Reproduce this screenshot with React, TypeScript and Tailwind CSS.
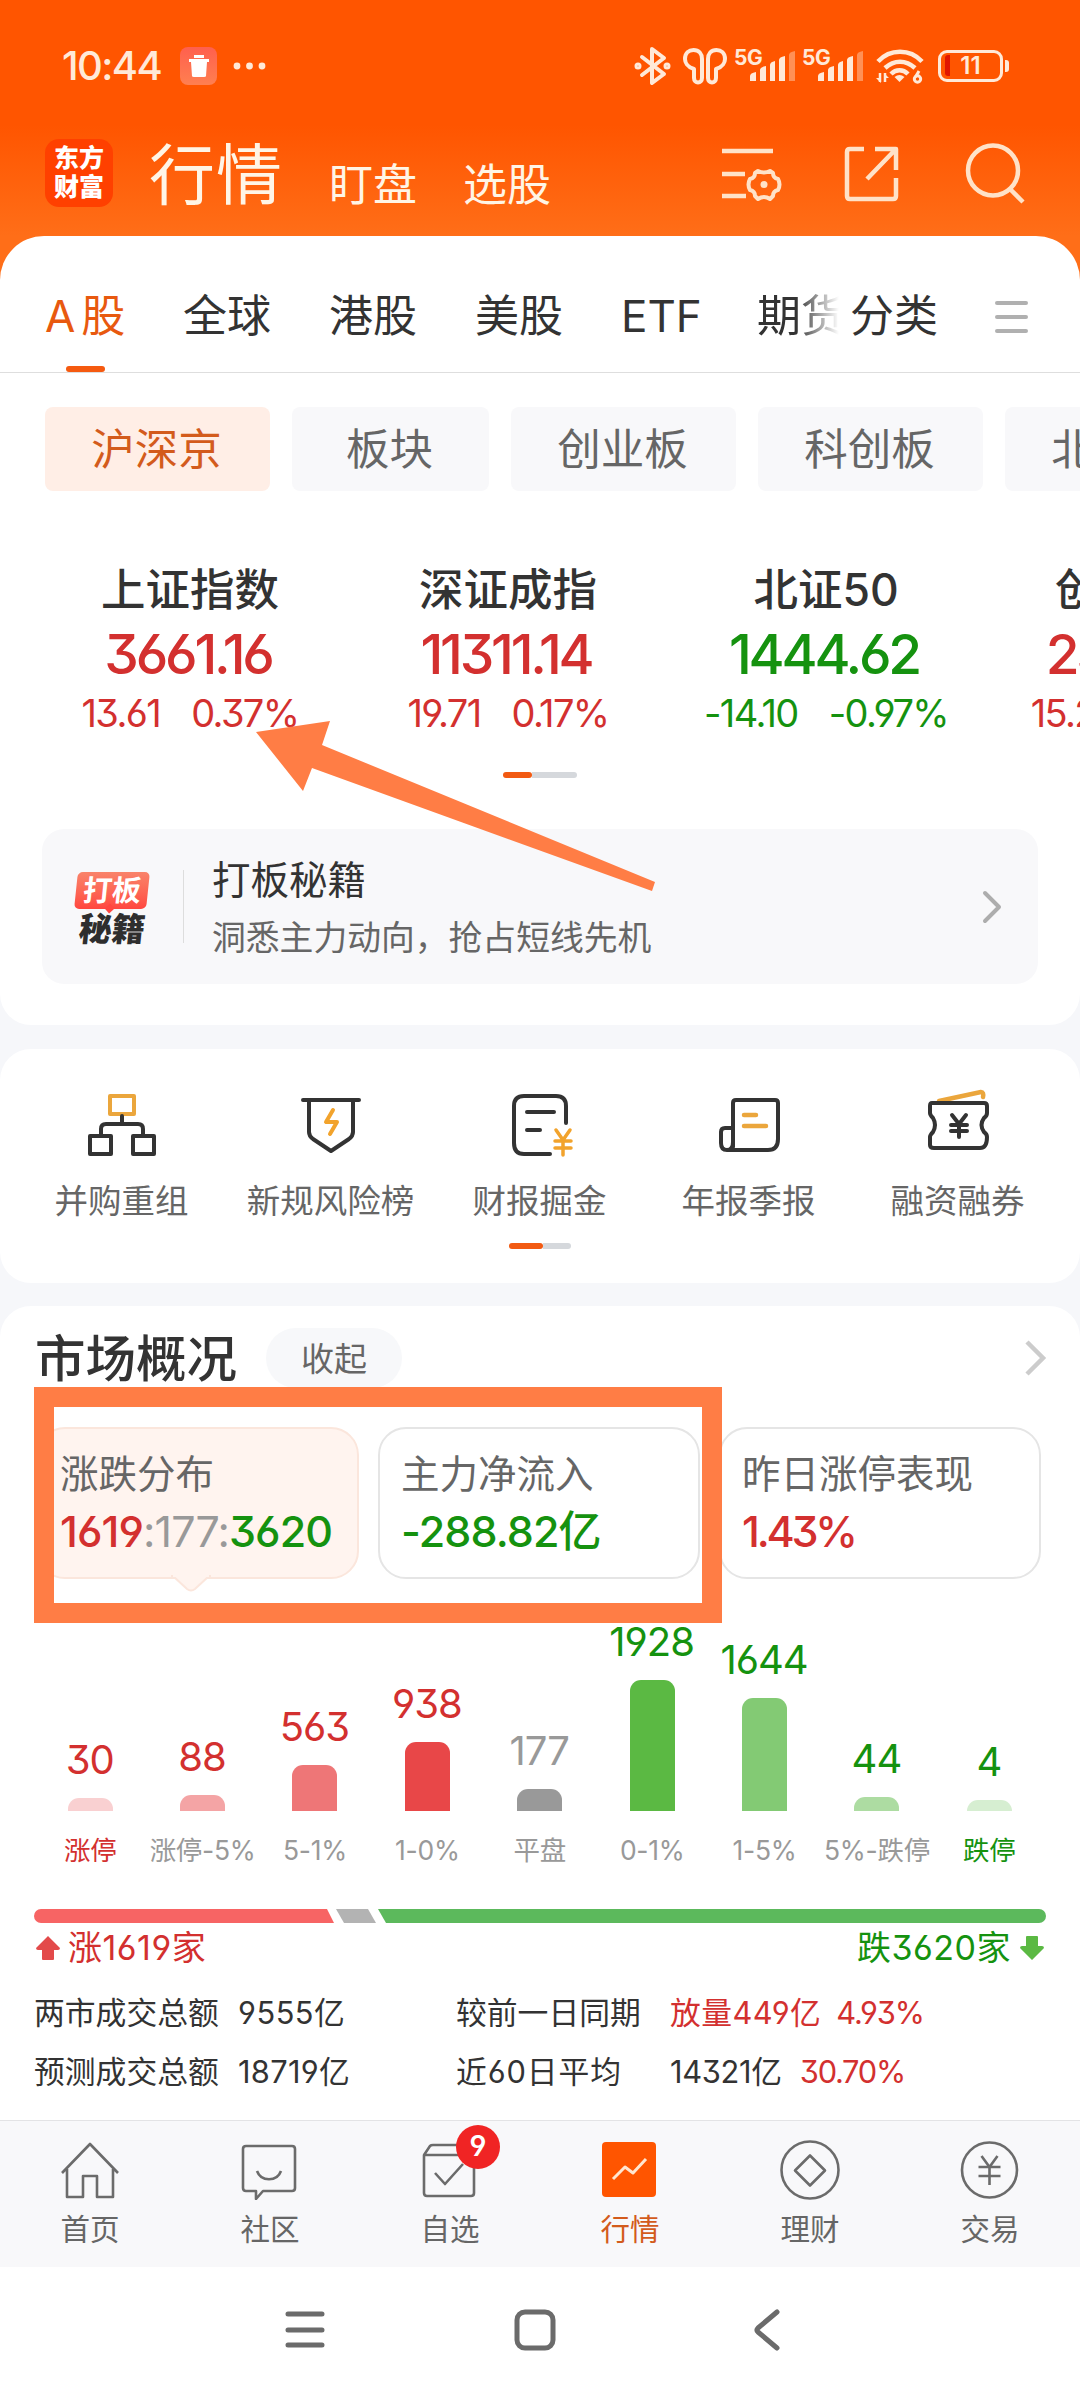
import type { ReactNode } from 'react';
import clsx from 'clsx';

const RED = 'text-[#d3302f]';
const GREEN = 'text-[#15920f]';

const tabs = [
  { label: '全球', width: 'w-[146px]' },
  { label: '港股', width: 'w-[146px]' },
  { label: '美股', width: 'w-[146px]' },
  { label: 'ETF', width: 'w-[136px]' },
];

const chips = [
  { label: '沪深京', width: 'w-[225px]', active: true },
  { label: '板块', width: 'w-[197px]' },
  { label: '创业板', width: 'w-[225px]' },
  { label: '科创板', width: 'w-[225px]' },
  { label: '北交所', width: 'w-[225px]' },
];

const indices = [
  { name: '上证指数', value: '3661.16', change: '13.61', percent: '0.37%', color: RED },
  { name: '深证成指', value: '11311.14', change: '19.71', percent: '0.17%', color: RED },
  { name: '北证50', value: '1444.62', change: '-14.10', percent: '-0.97%', color: GREEN },
  { name: '创业板指', value: '2359.80', change: '15.28', percent: '0.65%', color: RED },
];

const distribution = [
  { count: 30, label: '涨停', height: 13, bar: 'bg-[#f9d0d1]', color: RED, labelColor: RED },
  { count: 88, label: '涨停-5%', height: 16, bar: 'bg-[#f4a4a5]', color: RED },
  { count: 563, label: '5-1%', height: 46, bar: 'bg-[#ee7677]', color: RED },
  { count: 938, label: '1-0%', height: 69, bar: 'bg-[#e84748]', color: RED },
  { count: 177, label: '平盘', height: 22, bar: 'bg-[#999999]', color: 'text-[#999]' },
  { count: 1928, label: '0-1%', height: 131, bar: 'bg-[#5bb943]', color: GREEN },
  { count: 1644, label: '1-5%', height: 113, bar: 'bg-[#83ca74]', color: GREEN },
  { count: 44, label: '5%-跌停', height: 14, bar: 'bg-[#addca2]', color: GREEN },
  { count: 4, label: '跌停', height: 11, bar: 'bg-[#d6eed1]', color: GREEN, labelColor: GREEN },
];

function Signal() {
  return (
    <div className="flex w-[62px] h-[36px]">
      <span className="text-[21px] leading-[20px] font-bold tracking-[-0.5px]">5G</span>
      <svg className="-ml-[12px] shrink-0" width="46" height="36" viewBox="0 0 46 36" fill="currentColor">
        <path d="M0 28q0-3 6-4v9H0zM10 22q0-3 6-4v15h-6zM20 17q0-3 5-4v20h-5zM29 12q0-3 6-4v25h-6z" />
        <path d="M39 7q0-3 6-4v30h-6z" opacity=".4" />
      </svg>
    </div>
  );
}

function StatusBar() {
  return (
    <div className="flex h-[132px] items-center pl-[62px] text-[#ffe9d8]">
      <span className="w-[118px] text-[40px] leading-[40px] font-medium tracking-[-1.6px]">10:44</span>
      <div className="flex h-[38px] w-[37px] items-center justify-center rounded-[8px] bg-linear-to-b from-[#ff5f4e] to-[#ff7f50]">
        <svg width="22" height="22" viewBox="0 0 22 22" fill="#fff">
          <path d="M6 0h10v3H6zM1 4h20v3h-2l-1 14q0 1-2 1H6q-2 0-2-1L3 7H1z" />
        </svg>
      </div>
      <svg className="ml-[16px]" width="36" height="8" viewBox="0 0 36 8" fill="currentColor">
        <circle cx="4" cy="4" r="3.4" />
        <circle cx="16.500" cy="4" r="3.400" />
        <circle cx="29" cy="4" r="3.400" />
      </svg>
      <div className="ml-auto flex items-center pr-[71px]">
        <svg width="38" height="42" viewBox="0 0 38 42" fill="none" stroke="currentColor" strokeWidth="4" strokeLinejoin="round" strokeLinecap="round">
          <path d="M8 12 30 29 18 38V4l12 9L8 30" />
          <circle cx="4" cy="21" r="1.500" />
          <circle cx="33" cy="21" r="1.500" />
        </svg>
        <svg className="ml-[11px]" width="44" height="38" viewBox="0 0 44 38" fill="none" stroke="currentColor" strokeWidth="4">
          <path d="M11 22C4 20 2 15 2 12 2 6 6 3 10.500 3 16 3 19 7 19 12v19c0 6-8 6-8 0z" strokeLinejoin="round" />
          <path d="M33 22c7-2 9-7 9-10 0-6-4-9-8.500-9C28 3 25 7 25 12v19c0 6 8 6 8 0z" strokeLinejoin="round" />
        </svg>
        <div className="ml-[7px] flex gap-[6px]">
          <Signal />
          <Signal />
        </div>
        <svg className="ml-[12px]" width="48" height="38" viewBox="0 0 48 38" fill="none" stroke="currentColor" strokeWidth="4.500">
          <path d="M2 14.500C14 1.500 34 1.500 46 14.500M9 21C18 12.500 30 12.500 39 21M15 27c5-5 12-5 17 0" />
          <path d="m23.500 35-5-5q5-4 10 0z" fill="currentColor" stroke="none" />
          <path d="M4 26v9M9 26v9" strokeWidth="2.500" />
          <path d="m0 31 5 5v-5zM13 31l-5-5v5z" fill="currentColor" stroke="none" />
          <circle cx="41.500" cy="32" r="3.200" strokeWidth="3" />
          <path d="m39.500 30 3.500-6" strokeWidth="3" />
        </svg>
        <div className="relative ml-[14px] flex h-[32px] w-[65px] items-center justify-center rounded-[9px] border-[3px] border-current">
          <span className="absolute top-[2px] left-[4px] h-[21px] w-[5px] rounded-l-[3px] bg-[#e01500]" />
          <span className="text-[24px] leading-[26px] font-semibold">11</span>
        </div>
        <span className="ml-[2px] h-[12px] w-[4px] rounded-r-[3px] bg-current" />
      </div>
    </div>
  );
}

function TopNav() {
  return (
    <div className="flex h-[82px] items-center pl-[45px] text-[#fff5e6]">
      <div className="flex h-[68px] w-[68px] flex-col items-center justify-center rounded-[14px] bg-[#ff4000] text-[25px] leading-[29px] font-black text-white">
        <span>东方</span>
        <span>财富</span>
      </div>
      <span className="mt-[3px] ml-[36px] text-[66px] leading-[82px] tracking-[1px]">行情</span>
      <span className="mt-[23px] ml-[46px] text-[44px] leading-[60px]">盯盘</span>
      <span className="mt-[23px] ml-[46px] text-[44px] leading-[60px]">选股</span>
      <svg className="ml-[169px]" width="62" height="60" viewBox="0 0 62 60" fill="none" stroke="#ffe2c8" strokeWidth="4.500">
        <path d="M2 8h51M2 31h23M2 53h24" />
        <path
          d="M38 28q6 3 12 0l3 2q0 5 5 6 3 5.500 0 11-5 1-5 6l-3 3q-6-4-12 0l-3-3q0-5-5-6-3-5.500 0-11 5-1 5-6z"
          strokeWidth="4"
          strokeLinejoin="round"
        />
        <circle cx="44" cy="41.500" r="3.500" fill="#ffe2c8" stroke="none" />
      </svg>
      <svg className="ml-[62px]" width="56" height="58" viewBox="0 0 56 58" fill="none" stroke="#ffe2c8" strokeWidth="4.500" strokeLinejoin="round">
        <path d="M20 5H6q-3 0-3 3v44q0 3 3 3h43q3 0 3-3V34M31 5h21v21M51 6 23 35" />
      </svg>
      <svg className="ml-[64px]" width="62" height="62" viewBox="0 0 62 62" fill="none" stroke="#ffe2c8" strokeWidth="4.500">
        <circle cx="29" cy="28.500" r="25" />
        <path d="m46 47 13 13" />
      </svg>
    </div>
  );
}

function MarketTabs() {
  return (
    <div className="flex h-[137px] items-center border-b border-[#dedede] pt-[25px] pl-[45px] text-[44px] leading-[111px] text-[#333]">
      <div className="relative w-[138px] text-[#e8590f]">
        A<span className="ml-[6px]">股</span>
        <span className="absolute bottom-0 left-[21px] h-[6px] w-[39px] rounded-full bg-[#f55a10]" />
      </div>
      {tabs.map((tab) => (
        <span key={tab.label} className={tab.width}>
          {tab.label}
        </span>
      ))}
      <span className="w-[93px] overflow-hidden whitespace-nowrap [mask-image:linear-gradient(to_right,#000_42%,transparent_88%)]">期货</span>
      <span>分类</span>
      <div className="ml-[57px] flex flex-col gap-[10px]">
        <span className="h-[4px] w-[33px] rounded-full bg-[#b0b0b0]" />
        <span className="h-[4px] w-[33px] rounded-full bg-[#b0b0b0]" />
        <span className="h-[4px] w-[33px] rounded-full bg-[#b0b0b0]" />
      </div>
    </div>
  );
}

function Chips() {
  return (
    <div className="flex gap-[22px] overflow-hidden pt-[34px] pl-[45px]">
      {chips.map((chip) => (
        <div
          key={chip.label}
          className={clsx(
            'h-[84px] shrink-0 rounded-[8px] pr-[2px] text-center text-[43.500px] leading-[84px]',
            chip.width,
            chip.active ? 'bg-[#ffeee6] text-[#d35b1c]' : 'bg-[#f8f8fa] text-[#666]',
          )}
        >
          {chip.label}
        </div>
      ))}
    </div>
  );
}

function Pager({ active, rest }: { active: string; rest: string }) {
  return (
    <div className="flex justify-center">
      <span className={clsx('h-[6px] rounded-full bg-[#f25a12]', active)} />
      <span className={clsx('h-[6px] rounded-r-full bg-[#d5d8dc]', rest)} />
    </div>
  );
}

function Indices() {
  return (
    <div className="flex overflow-hidden pt-[69px] pl-[31px]">
      {indices.map((item) => (
        <div key={item.name} className="flex w-[318px] shrink-0 flex-col items-center">
          <span className="text-[44.500px] leading-[60px] font-medium text-[#333]">{item.name}</span>
          <span className={clsx('mr-[4px] text-[55px] leading-[69px] font-medium tracking-[-3.200px]', item.color)}>{item.value}</span>
          <div className={clsx('flex gap-[31px] text-[38px] leading-[49px] tracking-[-1.600px]', item.color)}>
            <span>{item.change}</span>
            <span>{item.percent}</span>
          </div>
        </div>
      ))}
    </div>
  );
}

function TipBanner() {
  return (
    <div className="mx-[42px] mt-[51px] flex h-[155px] items-center rounded-[22px] bg-[#f8f8fa]">
      <div className="ml-[33px] flex w-[74px] flex-col items-center pt-[3px]">
        <div className="relative h-[37px] w-[72px] -skew-x-6 rounded-[5px] bg-linear-to-b from-[#f9836a] to-[#ff4640] text-center text-[29px] leading-[38px] font-bold text-white">
          打板
          <span className="absolute -bottom-[3px] left-[32px] h-[7px] w-[7px] rotate-45 bg-[#ff4640]" />
        </div>
        <span className="mt-[4px] -skew-x-6 text-[33px] leading-[32px] font-black text-[#2e2e2e]">秘籍</span>
      </div>
      <span className="ml-[34px] h-[73px] w-px bg-[#ddd]" />
      <div className="ml-[28px] pt-[6px]">
        <div className="text-[38.500px] leading-[57px] text-[#333]">打板秘籍</div>
        <div className="text-[33.800px] leading-[58px] text-[#666]">洞悉主力动向，抢占短线先机</div>
      </div>
      <svg className="mr-[35px] ml-auto" width="22" height="36" viewBox="0 0 22 36" fill="none" stroke="#adadad" strokeWidth="4" strokeLinecap="round" strokeLinejoin="round">
        <path d="m4 4 14 14L4 32" />
      </svg>
    </div>
  );
}

const shortcuts: { label: string; icon: ReactNode }[] = [
  {
    label: '并购重组',
    icon: (
      <>
        <path d="M23 7h24v18H23z" stroke="#eba63c" />
        <path d="M35 27v8M14 45v-5q0-5 5-5h32q5 0 5 5v5M3 47h21v18H3zM46 47h21v18H46z" />
      </>
    ),
  },
  {
    label: '新规风险榜',
    icon: (
      <>
        <path d="M7 11h56M13 11v32q0 4 4 7l18 12 18-12q4-3 4-7V11" />
        <path d="m37 21-7 12h11l-7 12" stroke="#f2a32c" />
      </>
    ),
  },
  {
    label: '财报掘金',
    icon: (
      <>
        <path d="M61 34V17q0-10-10-10H19Q9 7 9 17v37q0 11 10 11h26M22 23h27M22 41h13" />
        <path d="m51 41 7 10 7-10M58 51v15M50 52h16M50 59h16" stroke="#f2a32c" strokeWidth="3.500" />
      </>
    ),
  },
  {
    label: '年报季报',
    icon: (
      <>
        <path d="M19 58V14q0-3 3-3h39q3 0 3 3v36q0 11-10 11H13q-6 0-6-7V43q0-4 4-4h8v14q0 8-6 8" />
        <path d="M30 26h12M30 37h22" stroke="#eba63c" strokeWidth="4.500" />
      </>
    ),
  },
  {
    label: '融资融券',
    icon: (
      <>
        <path d="m16 12 42-9q3 0 2 5" stroke="#eba63c" strokeWidth="4.500" />
        <path d="M9 14h52q3 0 3 3v7q0 3-3 5-5 7 0 14 3 2 3 5 0 11-7 11H11q-4 0-4-3v-8q0-2 3-5 4-7 0-14-3-3-3-5v-7q0-3 2-3z" />
        <path d="m29 26 7 9 7-9M36 35v13M28 36h16M28 42h16" />
      </>
    ),
  },
];

function Shortcuts() {
  return (
    <section className="mt-[24px] h-[234px] rounded-[31px] bg-white pt-[40px]">
      <div className="flex pl-[17px]">
        {shortcuts.map((item) => (
          <div key={item.label} className="flex w-[209px] flex-col items-center">
            <svg width="70" height="70" viewBox="0 0 70 70" fill="none" stroke="#333" strokeWidth="4" strokeLinecap="round" strokeLinejoin="round">
              {item.icon}
            </svg>
            <span className="mt-[18px] text-[33.500px] leading-[48px] whitespace-nowrap text-[#666]">{item.label}</span>
          </div>
        ))}
      </div>
      <div className="mt-[18px]">
        <Pager active="w-[34px]" rest="w-[28px]" />
      </div>
    </section>
  );
}

function OverviewCards() {
  const card = 'h-[152px] w-[322px] rounded-[28px] border-2 pt-[16px] pl-[21px]';
  const label = 'block text-[38.500px] leading-[58px] text-[#666]';
  const value = 'block text-[43px] leading-[56px] font-medium';

  return (
    <div className="relative mt-[39px] flex gap-[19px] pl-[37px]">
      <div className={clsx(card, 'relative border-[#fbe6dc] bg-[#fff4ef]')}>
        <span className={label}>涨跌分布</span>
        <span className={clsx(value, 'tracking-[-0.900px]')}>
          <span className={RED}>1619</span>
          <span className="font-normal text-[#999]">:177:</span>
          <span className={GREEN}>3620</span>
        </span>
        <svg className="absolute -bottom-[16px] left-[132px]" width="40" height="18" viewBox="0 0 40 18">
          <path d="M0 1h2l14 13q4 3 8 0L38 1h2" fill="#fff4ef" stroke="#fbe6dc" strokeWidth="2" />
          <path d="M2 0h36v2H2z" fill="#fff4ef" />
        </svg>
      </div>
      <div className={clsx(card, 'border-[#e5e5e5]')}>
        <span className={label}>主力净流入</span>
        <span className={clsx(value, GREEN, 'tracking-[-0.900px]')}>-288.82亿</span>
      </div>
      <div className={clsx(card, 'border-[#e5e5e5]')}>
        <span className={label}>昨日涨停表现</span>
        <span className={clsx(value, RED, 'tracking-[-3.200px]')}>1.43%</span>
      </div>
      {/* hand-drawn highlight around the first two cards */}
      <div className="absolute -top-[40px] left-[34px] h-[236px] w-[688px] border-[20px] border-[#ff7d45]" />
    </div>
  );
}

function DistributionChart() {
  return (
    <>
      <div className="flex h-[232px] items-end pl-[34px]">
        {distribution.map((item) => (
          <div key={item.label} className="flex w-[112.400px] flex-col items-center">
            <span className={clsx('mr-px text-[40px] leading-[50px] tracking-[-1px]', item.color)}>{item.count}</span>
            <span className={clsx('mt-[13px] w-[45px] rounded-t-[11px]', item.bar)} style={{ height: item.height }} />
          </div>
        ))}
      </div>
      <div className="mt-[20px] flex pl-[34px]">
        {distribution.map((item) => (
          <span
            key={item.label}
            className={clsx('flex w-[112.400px] justify-center text-[26.500px] leading-[38px] tracking-[-0.300px] whitespace-nowrap', item.labelColor ?? 'text-[#999]')}
          >
            {item.label}
          </span>
        ))}
      </div>
    </>
  );
}

function Totals() {
  return (
    <>
      <div className="mt-[40px] flex h-[14px] px-[34px]">
        <span className="w-[300px] rounded-l-full bg-[#f76464] [clip-path:polygon(0_0,293px_0,100%_100%,0_100%)]" />
        <span className="ml-[2px] w-[40px] bg-[#b3b3b3] [clip-path:polygon(0_0,32px_0,100%_100%,8px_100%)]" />
        <span className="ml-[2px] flex-1 rounded-r-full bg-[#5cb95c] [clip-path:polygon(0_0,100%_0,100%_100%,8px_100%)]" />
      </div>
      <div className="flex h-[50px] items-center px-[35px] text-[34px] leading-[50px] tracking-[0.500px]">
        <svg width="26" height="26" viewBox="0 0 26 26" fill="#e34a4a">
          <path d="m13 1 12 12q0 2-2 2h-4v9q0 1-1 1H8q-1 0-1-1v-9H3q-2 0-2-2z" />
        </svg>
        <span className={clsx('ml-[7px]', RED)}>涨1619家</span>
        <span className={clsx('ml-auto', GREEN)}>跌3620家</span>
        <svg className="ml-[8px]" width="26" height="26" viewBox="0 0 26 26" fill="#5bb943">
          <path d="m13 25 12-12q0-2-2-2h-4V2q0-1-1-1H8Q7 1 7 2v9H3q-2 0-2 2z" />
        </svg>
      </div>
      <div className="mt-[10px] grid grid-cols-[204px_218px_214px_1fr] pl-[34px] text-[30.800px] leading-[59px] whitespace-nowrap text-[#333]">
        <span>两市成交总额</span>
        <span className="tracking-[0.500px]">9555亿</span>
        <span>较前一日同期</span>
        <span className={RED}>
          <span className="tracking-[0.400px]">放量449亿</span>
          <span className="ml-[15px] tracking-[-1.200px]">4.93%</span>
        </span>
        <span>预测成交总额</span>
        <span className="tracking-[0.300px]">18719亿</span>
        <span className="tracking-[0.900px]">近60日平均</span>
        <span>
          <span className="tracking-[-0.300px]">14321亿</span>
          <span className={clsx('ml-[18px] tracking-[-1.300px]', RED)}>30.70%</span>
        </span>
      </div>
    </>
  );
}

function MarketOverview() {
  return (
    <section className="mt-[23px] h-[814px] rounded-t-[31px] bg-white pt-[22px]">
      <div className="flex h-[60px] items-center pr-[31px] pl-[35px]">
        <h2 className="pt-[2px] text-[50.500px] leading-[60px] font-medium text-[#333]">市场概况</h2>
        <span className="ml-[29px] h-[60px] w-[136px] rounded-full bg-[#f7f8fa] text-center text-[33px] leading-[62px] text-[#666]">收起</span>
        <svg className="ml-auto" width="26" height="40" viewBox="0 0 26 40" fill="none" stroke="#ccc" strokeWidth="4.500">
          <path d="m4 4 16 16L4 36" />
        </svg>
      </div>
      <OverviewCards />
      <DistributionChart />
      <Totals />
    </section>
  );
}

const bottomTabs: { label: string; active?: boolean; badge?: number; icon: ReactNode }[] = [
  { label: '首页', icon: <path d="M2 33 30 4l28 29M7 29v28h16V36h14v21h16V29" /> },
  { label: '社区', icon: <path d="M6 6h46q3 0 3 3v39q0 3-3 3H23l-7 8v-8H6q-3 0-3-3V9q0-3 3-3zM17 31c4 11 20 11 24 0" /> },
  { label: '自选', badge: 9, icon: <path d="m4 15 6-9q1-1 3-1h35l6 10v38q0 3-3 3H7q-3 0-3-3V15h50M15 33l10 11 18-20" /> },
  {
    label: '行情',
    active: true,
    icon: (
      <>
        <rect x="2" y="2" width="54" height="55" rx="4" fill="#ff5500" stroke="none" />
        <path d="m13 39 12-12 8 6 13-14" stroke="#ffe6d0" strokeWidth="3" />
      </>
    ),
  },
  {
    label: '理财',
    icon: (
      <>
        <circle cx="30" cy="30" r="28.500" />
        <path d="m30 15.500 15 15-15 15-15-15z" />
      </>
    ),
  },
  {
    label: '交易',
    icon: (
      <>
        <circle cx="29.500" cy="30" r="27.500" />
        <path d="m21.500 16 8 11 8-11M29.500 27v18M18.500 27h22M18.500 36h22" />
      </>
    ),
  },
];

function BottomTabs() {
  return (
    <nav className="flex h-[147px] border-t border-[#e3e3e5] bg-[#f8f8fa]">
      {bottomTabs.map((tab) => (
        <div key={tab.label} className="relative flex w-[180px] flex-col items-center pt-[19px]">
          <svg width="60" height="60" viewBox="0 0 60 60" fill="none" stroke="#6b6b6b" strokeWidth="2.600" strokeLinejoin="round">
            {tab.icon}
          </svg>
          <span className={clsx('mt-[8px] text-[29.500px] leading-[42px]', tab.active ? 'text-[#d35b1c]' : 'text-[#666]')}>{tab.label}</span>
          {tab.badge && (
            <span className="absolute top-[4px] left-[96px] h-[44px] w-[44px] rounded-full bg-[#f02424] text-center text-[28px] leading-[43px] font-semibold text-white">
              {tab.badge}
            </span>
          )}
        </div>
      ))}
    </nav>
  );
}

function SystemNav() {
  return (
    <div className="flex h-[133px] items-center bg-white pb-[8px] pl-[284px]">
      <svg width="42" height="42" viewBox="0 0 42 42" stroke="#6b6b6b" strokeWidth="5" strokeLinecap="round">
        <path d="M4 5h34M4 21h34M4 36h34" />
      </svg>
      <svg className="ml-[188px]" width="42" height="42" viewBox="0 0 42 42" fill="none" stroke="#6b6b6b" strokeWidth="5">
        <rect x="3" y="3" width="36" height="36" rx="8" />
      </svg>
      <svg className="ml-[194px]" width="34" height="44" viewBox="0 0 34 44" fill="none" stroke="#6b6b6b" strokeWidth="5" strokeLinecap="round" strokeLinejoin="round">
        <path d="M27 4 8 20q-2 2 0 4l19 16" />
      </svg>
    </div>
  );
}

export default function App() {
  return (
    <div className="relative h-[2400px] w-[1080px] overflow-hidden bg-[#f6f7fa] font-['Inter','Noto_Sans_CJK_SC',sans-serif] [font-feature-settings:'cv03','cv04','cv09']">
      <div className="bg-[linear-gradient(#ff5500_0px,#ff5500_125px,#ff6e18_236px,#ff6e18_300px,#f6f7fa_300px)]">
        <StatusBar />
        <TopNav />
        <main className="mt-[22px] h-[789px] rounded-t-[44px] rounded-b-[31px] bg-white">
          <MarketTabs />
          <Chips />
          <Indices />
          <div className="mt-[34px]">
            <Pager active="w-[29px]" rest="w-[45px]" />
          </div>
          <TipBanner />
        </main>
      </div>
      <Shortcuts />
      <MarketOverview />
      <BottomTabs />
      <SystemNav />
      <svg className="absolute top-[715px] left-[250px]" width="410" height="182" viewBox="250 715 410 182" fill="#ff7d45">
        <path d="m256 732 74-11-8 24 333 137-3 9-340-123-9 23z" />
      </svg>
    </div>
  );
}
